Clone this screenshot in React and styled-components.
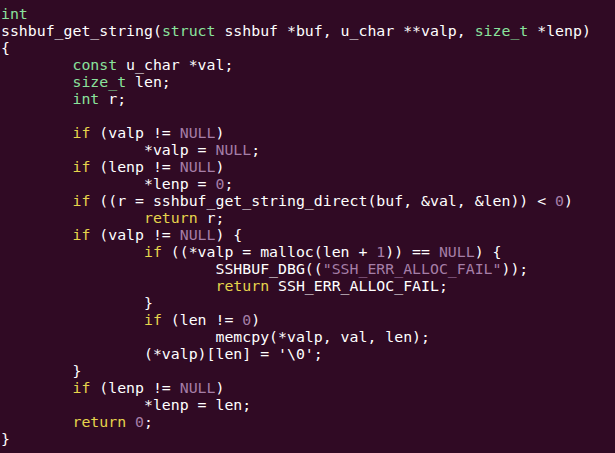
import styled, { createGlobalStyle } from "styled-components";

const Global = createGlobalStyle`
  html, body { margin: 0; padding: 0; background: #300a24; }
`

const Terminal = styled.div`width: 615px; height: 453px; overflow: hidden; background: #300a24; padding: 6px 0 0 1px; box-sizing: border-box;`
const Code = styled.pre`margin: 0; font-family: "DejaVu Sans Mono", "Liberation Mono", monospace; font-size: 14.85px; line-height: 17px; color: #ffffff; tab-size: 8; -moz-tab-size: 8;`
const Line = styled.div`white-space: pre; height: 17px;`
const Tok = styled.span`color: ${p => p.$kind === "type" ? "#8ae29c" : p.$kind === "kw" ? "#e6d44c" : p.$kind === "lit" ? "#a57ea7" : "#ffffff"};`

// t = type (green), k = keyword (yellow), c = literal (purple), plain strings are white
const lines = [
    [["t", "int"]],
    ["sshbuf_get_string(", ["t", "struct"], " sshbuf *buf, u_char **valp, ", ["t", "size_t"], " *lenp)"],
    ["{"],
    ["\t", ["t", "const"], " u_char *val;"],
    ["\t", ["t", "size_t"], " len;"],
    ["\t", ["t", "int"], " r;"],
    [],
    ["\t", ["k", "if"], " (valp != ", ["c", "NULL"], ")"],
    ["\t\t*valp = ", ["c", "NULL"], ";"],
    ["\t", ["k", "if"], " (lenp != ", ["c", "NULL"], ")"],
    ["\t\t*lenp = ", ["c", "0"], ";"],
    ["\t", ["k", "if"], " ((r = sshbuf_get_string_direct(buf, &val, &len)) < ", ["c", "0"], ")"],
    ["\t\t", ["k", "return"], " r;"],
    ["\t", ["k", "if"], " (valp != ", ["c", "NULL"], ") {"],
    ["\t\t", ["k", "if"], " ((*valp = malloc(len + ", ["c", "1"], ")) == ", ["c", "NULL"], ") {"],
    ["\t\t\tSSHBUF_DBG((", ["c", "\"SSH_ERR_ALLOC_FAIL\""], "));"],
    ["\t\t\t", ["k", "return"], " SSH_ERR_ALLOC_FAIL;"],
    ["\t\t}"],
    ["\t\t", ["k", "if"], " (len != ", ["c", "0"], ")"],
    ["\t\t\tmemcpy(*valp, val, len);"],
    ["\t\t(*valp)[len] = '\\0';"],
    ["\t}"],
    ["\t", ["k", "if"], " (lenp != ", ["c", "NULL"], ")"],
    ["\t\t*lenp = len;"],
    ["\t", ["k", "return"], " ", ["c", "0"], ";"],
    ["}"],
]

const kinds = { t: "type", k: "kw", c: "lit" }

const App = () => {
    return (
        <Terminal>
            <Global />
            <Code>
                {lines.map((line, i) => (
                    <Line key={i}>
                        {line.map((part, j) =>
                            typeof part === "string"
                                ? <Tok key={j}>{part}</Tok>
                                : <Tok key={j} $kind={kinds[part[0]]}>{part[1]}</Tok>
                        )}
                    </Line>
                ))}
            </Code>
        </Terminal>
    )
}

export default App
